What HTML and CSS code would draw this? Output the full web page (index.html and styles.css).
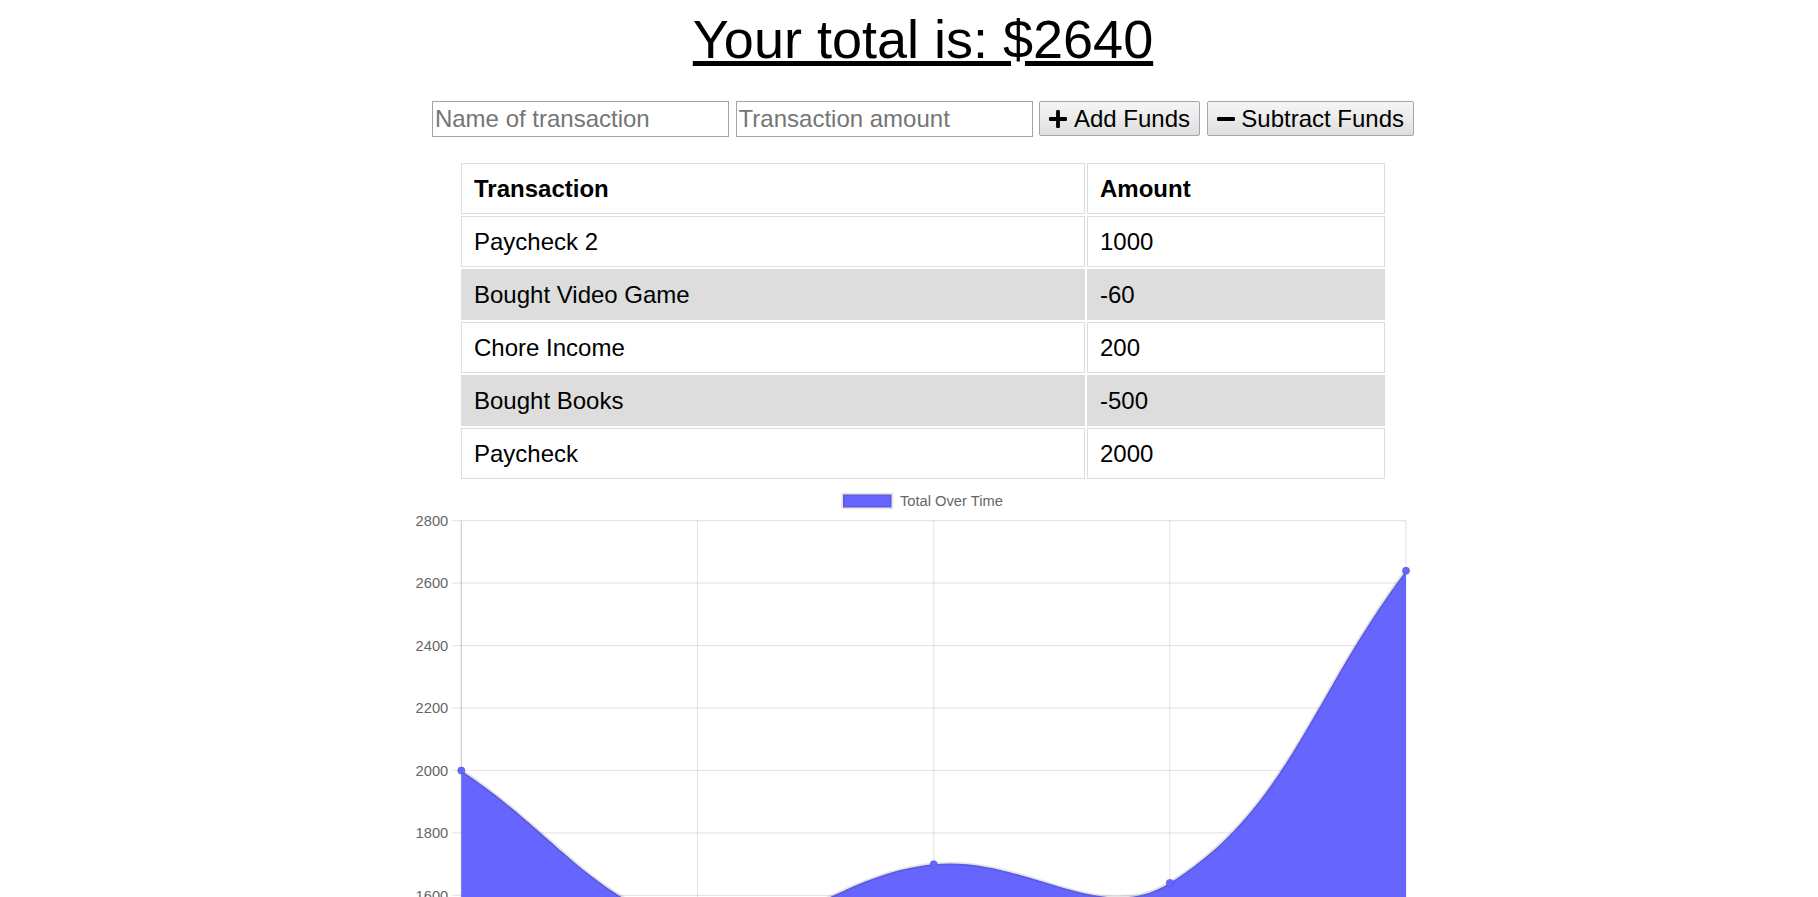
FILE: index.html
```html
<!DOCTYPE html>
<html lang="en">
<head>
<meta charset="utf-8">
<title>Budget Tracker</title>
<link rel="stylesheet" href="styles.css">
</head>
<body>
<main class="page">
  <h1 class="total">Your total is: $<span>2640</span></h1>

  <div class="form">
    <input class="field" type="text" placeholder="Name of transaction">
    <input class="field" type="text" placeholder="Transaction amount">
    <button class="btn" type="button">
      <svg class="ico" viewBox="0 32 448 448" aria-hidden="true"><path d="M416 208H272V64c0-17.67-14.33-32-32-32h-32c-17.67 0-32 14.33-32 32v144H32c-17.67 0-32 14.33-32 32v32c0 17.67 14.33 32 32 32h144v144c0 17.67 14.33 32 32 32h32c17.67 0 32-14.33 32-32V304h144c17.67 0 32-14.330 32-32v-32c0-17.67-14.33-32-32-32z"/></svg>
      <span>Add Funds</span>
    </button>
    <button class="btn" type="button">
      <svg class="ico" viewBox="0 32 448 448" aria-hidden="true"><path d="M416 208H32c-17.67 0-32 14.33-32 32v32c0 17.67 14.33 32 32 32h384c17.67 0 32-14.33 32-32v-32c0-17.67-14.33-32-32-32z"/></svg>
      <span>Subtract Funds</span>
    </button>
  </div>

  <table class="ledger">
    <thead>
      <tr><th class="c-name">Transaction</th><th class="c-amt">Amount</th></tr>
    </thead>
    <tbody>
      <tr><td>Paycheck 2</td><td>1000</td></tr>
      <tr><td>Bought Video Game</td><td>-60</td></tr>
      <tr><td>Chore Income</td><td>200</td></tr>
      <tr><td>Bought Books</td><td>-500</td></tr>
      <tr><td>Paycheck</td><td>2000</td></tr>
    </tbody>
  </table>

  <svg class="chart" viewBox="403 481 1040 416" width="1040" height="416" aria-label="Total Over Time chart">
    <!-- legend -->
    <rect class="legend-box" x="843" y="494.5" width="48.5" height="13"/>
    <text class="legend-text" x="900" y="505.8">Total Over Time</text>

    <!-- horizontal grid -->
    <g class="grid">
      <line x1="452" y1="520.7" x2="1406" y2="520.7"/>
      <line x1="452" y1="583.15" x2="1406" y2="583.15"/>
      <line x1="452" y1="645.6" x2="1406" y2="645.6"/>
      <line x1="452" y1="708.05" x2="1406" y2="708.05"/>
      <line x1="452" y1="770.5" x2="1406" y2="770.5"/>
      <line x1="452" y1="832.95" x2="1406" y2="832.95"/>
      <line x1="452" y1="895.4" x2="1406" y2="895.4"/>
      <!-- vertical grid -->
      <line x1="697.5" y1="520.7" x2="697.5" y2="970"/>
      <line x1="933.7" y1="520.7" x2="933.7" y2="970"/>
      <line x1="1169.8" y1="520.7" x2="1169.8" y2="970"/>
      <line x1="1406" y1="520.7" x2="1406" y2="970"/>
    </g>
    <line class="axis" x1="461.3" y1="520.7" x2="461.3" y2="970"/>

    <!-- y labels -->
    <g class="tick">
      <text x="448.3" y="525.9">2800</text>
      <text x="448.3" y="588.35">2600</text>
      <text x="448.3" y="650.8">2400</text>
      <text x="448.3" y="713.25">2200</text>
      <text x="448.3" y="775.7">2000</text>
      <text x="448.3" y="838.15">1800</text>
      <text x="448.3" y="900.6">1600</text>
    </g>

    <!-- area + line -->
    <path class="area" d="M461.3,770.5 C555.8,832.9 596.1,906.5 697.5,926.6 C785.0,944.0 837.8,873.1 933.7,864.2 C1026.7,855.6 1098.6,927.2 1169.8,882.9 C1287.5,809.8 1311.5,695.6 1406,570.7 L1406,960 L461.3,960 Z"/>
    <path class="line" d="M461.3,770.5 C555.8,832.9 596.1,906.5 697.5,926.6 C785.0,944.0 837.8,873.1 933.7,864.2 C1026.7,855.6 1098.6,927.2 1169.8,882.9 C1287.5,809.8 1311.5,695.6 1406,570.7"/>

    <!-- points -->
    <g class="pt">
      <circle cx="461.3" cy="770.5" r="3.7"/>
      <circle cx="697.5" cy="926.6" r="3.7"/>
      <circle cx="933.7" cy="864.2" r="3.7"/>
      <circle cx="1169.8" cy="882.9" r="3.7"/>
      <circle cx="1406" cy="570.7" r="3.7"/>
    </g>
  </svg>
</main>
</body>
</html>
```

FILE: styles.css
```css
html, body {
  margin: 0;
  padding: 0;
  background: #ffffff;
  overflow: hidden;
}

body {
  font-family: "Liberation Sans", Arial, sans-serif;
  color: #000000;
}

.page {
  padding: 8px 0 0 28px;
  text-align: center;
}

.total {
  margin: 0;
  font-size: 54px;
  line-height: 62px;
  font-weight: normal;
  text-decoration: underline;
}

.form {
  display: flex;
  justify-content: center;
  align-items: flex-start;
  gap: 6.67px;
  margin-top: 31px;
}

.field {
  box-sizing: border-box;
  width: 297px;
  height: 36px;
  margin: 0;
  padding: 0 2px;
  border: 1px solid #a3a3a3;
  background: #ffffff;
  color: #000000;
  font: 24px "Liberation Sans", Arial, sans-serif;
}

.field::placeholder {
  color: #757575;
  opacity: 1;
}

.btn {
  box-sizing: border-box;
  height: 35.3px;
  margin: 0;
  padding: 0 9px;
  display: inline-flex;
  align-items: center;
  gap: 6.67px;
  border: 1px solid #a6a6a6;
  border-radius: 2px;
  background: linear-gradient(#f5f5f5, #ededed 40%, #dedede);
  color: #000000;
  font: 24px "Liberation Sans", Arial, sans-serif;
}

.ico {
  width: 18px;
  height: 18px;
  flex: none;
  fill: #000000;
}

.ledger {
  margin: 24px auto 0;
  width: 928px;
  table-layout: fixed;
  border-collapse: separate;
  border-spacing: 2px;
  text-align: left;
}

.ledger th,
.ledger td {
  box-sizing: border-box;
  border: 1px solid #dddddd;
  padding: 10.5px 12px;
  font-size: 24px;
  line-height: 28px;
}

.ledger th {
  font-weight: bold;
}

.ledger .c-name {
  width: 624px;
}

.ledger .c-amt {
  width: 298px;
}

.ledger tbody tr:nth-child(even) td {
  background: #dddddd;
}

.chart {
  display: block;
  margin: 0 auto;
}

.legend-box {
  fill: #6666ff;
  stroke: rgba(0, 0, 0, 0.1);
  stroke-width: 3.5;
}

.legend-text,
.tick text {
  font-family: "Liberation Sans", Arial, sans-serif;
  font-size: 14.7px;
  fill: #666666;
}

.tick text {
  text-anchor: end;
}

.grid line {
  stroke: rgba(0, 0, 0, 0.1);
  stroke-width: 1.2;
}

.axis {
  stroke: rgba(0, 0, 0, 0.2);
  stroke-width: 1.2;
}

.area {
  fill: #6666ff;
}

.line {
  fill: none;
  stroke: rgba(0, 0, 0, 0.1);
  stroke-width: 3.6;
}

.pt circle {
  fill: #6666ff;
  stroke: rgba(0, 0, 0, 0.1);
  stroke-width: 1.2;
}
```
